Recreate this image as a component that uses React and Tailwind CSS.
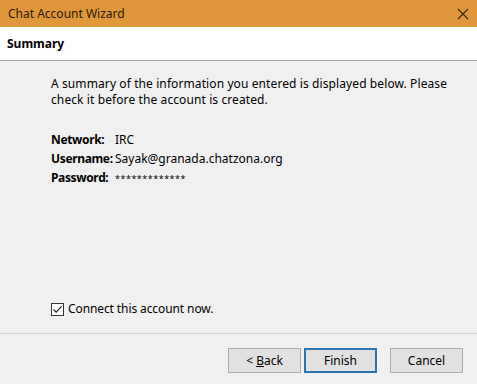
const font = { fontFamily: '"Segoe UI", "Noto Sans", sans-serif' }

function Row({ label, value, small }) {
  return (
    <div className="flex h-[19px] items-center">
      <span className="w-[64px] shrink-0 whitespace-nowrap font-bold tracking-[-0.35px]">{label}</span>
      <span className={small ? 'pt-[2px] text-[9px] tracking-[0.5px]' : ''}>{value}</span>
    </div>
  )
}

export default function App() {
  return (
    <div className="flex h-[384px] w-[477px] flex-col bg-[#f0f0f0] text-[12px] text-black" style={font}>
      {/* title bar */}
      <div className="flex h-[27px] items-center justify-between bg-[#e0973a] pl-2 pr-[8px]">
        <span className="text-[12px] text-[#2b1a08]">Chat Account Wizard</span>
        <svg width="12" height="12" viewBox="0 0 12 12" className="text-[#3a2410]">
          <path d="M1 1 L11 11 M11 1 L1 11" stroke="currentColor" strokeWidth="1.1" />
        </svg>
      </div>

      {/* page header */}
      <div className="flex h-[34px] items-center border-b border-[#a0a0a0] bg-white pl-[7px]">
        <span className="font-bold">Summary</span>
      </div>

      {/* body */}
      <div className="flex flex-1 flex-col pl-[51px] pt-[15px]">
        <p className="w-[405px] leading-[16px] tracking-[0.1px]">
          A summary of the information you entered is displayed below. Please check it before the account is created.
        </p>
        <div className="mt-[22px]">
          <Row label="Network:" value="IRC" />
          <Row label="Username:" value="Sayak@granada.chatzona.org" />
          <Row label="Password:" value="*************" small />
        </div>

        <label className="mt-auto mb-[15px] flex items-center gap-[4px]">
          <span className="flex h-[13px] w-[13px] items-center justify-center border border-[#333] bg-white">
            <svg width="11" height="11" viewBox="0 0 11 11">
              <path d="M1.5 5.5 L4.2 8.2 L9.5 2.3" fill="none" stroke="#222" strokeWidth="1.2" />
            </svg>
          </span>
          <span className="tracking-[-0.1px]">Connect this account now.</span>
        </label>
      </div>

      {/* footer */}
      <div className="flex h-[51px] items-start justify-end gap-[3px] border-t border-[#d5d5d5] pr-[14px] pt-[14px]">
        <button className="h-[25px] w-[73px] border border-[#adadad] bg-[#e1e1e1]">
          &lt; <span className="underline">B</span>ack
        </button>
        <button className="h-[25px] w-[73px] border-2 border-[#2a74b0] bg-[#e1e1e1]">Finish</button>
        <button className="ml-[10px] h-[25px] w-[73px] border border-[#adadad] bg-[#e1e1e1]">Cancel</button>
      </div>
    </div>
  )
}
